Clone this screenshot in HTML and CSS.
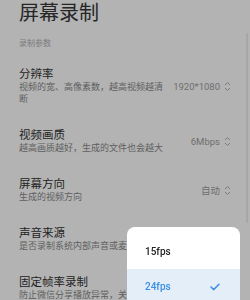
FILE: index.html
```html
<!DOCTYPE html>
<html lang="zh-CN">
<head>
<meta charset="utf-8">
<title>屏幕录制</title>
<link rel="stylesheet" href="styles.css">
</head>
<body>
<div class="page">
  <h1 class="title">屏幕录制</h1>
  <div class="section">录制参数</div>
  <div class="row">
    <div class="text">
      <div class="name">分辨率</div>
      <div class="desc">视频的宽、高像素数，越高视频越清断</div>
    </div>
    <div class="value">1920*1080<svg class="chev" width="7" height="11" viewBox="0 0 7 11"><path d="M1 4 L3.5 1.5 L6 4 M1 7 L3.5 9.5 L6 7"/></svg></div>
  </div>
  <div class="row">
    <div class="text">
      <div class="name">视频画质</div>
      <div class="desc">越高画质越好，生成的文件也会越大</div>
    </div>
    <div class="value">6Mbps<svg class="chev" width="7" height="11" viewBox="0 0 7 11"><path d="M1 4 L3.5 1.5 L6 4 M1 7 L3.5 9.5 L6 7"/></svg></div>
  </div>
  <div class="row">
    <div class="text">
      <div class="name">屏幕方向</div>
      <div class="desc">生成的视频方向</div>
    </div>
    <div class="value">自动<svg class="chev" width="7" height="11" viewBox="0 0 7 11"><path d="M1 4 L3.5 1.5 L6 4 M1 7 L3.5 9.5 L6 7"/></svg></div>
  </div>
  <div class="row">
    <div class="text">
      <div class="name">声音来源</div>
      <div class="desc">是否录制系统内部声音或麦克风声音</div>
    </div>
  </div>
  <div class="row">
    <div class="text">
      <div class="name">固定帧率录制</div>
      <div class="desc">防止微信分享播放异常，关闭可节省电量</div>
    </div>
  </div>
</div>
<div class="scrollbar"></div>
<div class="popup">
  <div class="opt">15fps</div>
  <div class="opt sel">24fps<svg class="check" width="10" height="8" viewBox="0 0 10 8"><path d="M1 4 L3.8 6.6 L9 1.2"/></svg></div>
</div>
</body>
</html>
```
FILE: styles.css
```css
html, body {
  margin: 0;
  padding: 0;
}
body {
  width: 250px;
  height: 300px;
  overflow: hidden;
  background: #b3b3b3;
  font-family: Roboto, "Noto Sans CJK SC", sans-serif;
}
.page {
  display: flex;
  flex-direction: column;
}
.title {
  margin: 0;
  padding: 0 19px;
  font-size: 20px;
  line-height: 26px;
  font-weight: 400;
  color: #262626;
}
.section {
  margin: 12px 0 6px;
  padding: 0 19px;
  font-size: 8px;
  line-height: 11px;
  color: #7b7b7b;
}
.row {
  display: flex;
  align-items: center;
  gap: 6px;
  padding: 12px 19px 11px;
}
.text {
  flex: 1;
  min-width: 0;
}
.name {
  font-size: 11.5px;
  line-height: 14px;
  color: #232323;
}
.desc {
  font-size: 9px;
  line-height: 12px;
  color: #5f5f5f;
}
.value {
  display: flex;
  align-items: center;
  gap: 4px;
  font-size: 9.5px;
  color: #6e6e6e;
  white-space: nowrap;
}
.chev path {
  fill: none;
  stroke: #7a7a7a;
  stroke-width: 1;
}
.scrollbar {
  position: fixed;
  left: 246px;
  top: 33px;
  width: 2px;
  height: 190px;
  background: #a7a7a7;
  border-radius: 1px;
}
.popup {
  position: fixed;
  left: 127px;
  top: 227px;
  width: 113px;
  height: 90px;
  padding-top: 7px;
  box-sizing: border-box;
  background: #ffffff;
  border-radius: 8px;
  overflow: hidden;
}
.opt {
  height: 35px;
  display: flex;
  align-items: center;
  justify-content: space-between;
  padding: 0 20px 0 18px;
  font-size: 10px;
  font-weight: 500;
  color: #222222;
}
.opt.sel {
  background: #e3eef9;
  color: #3a8ee3;
}
.check path {
  fill: none;
  stroke: #3a8ee3;
  stroke-width: 1.5;
  stroke-linecap: round;
  stroke-linejoin: round;
}
```
